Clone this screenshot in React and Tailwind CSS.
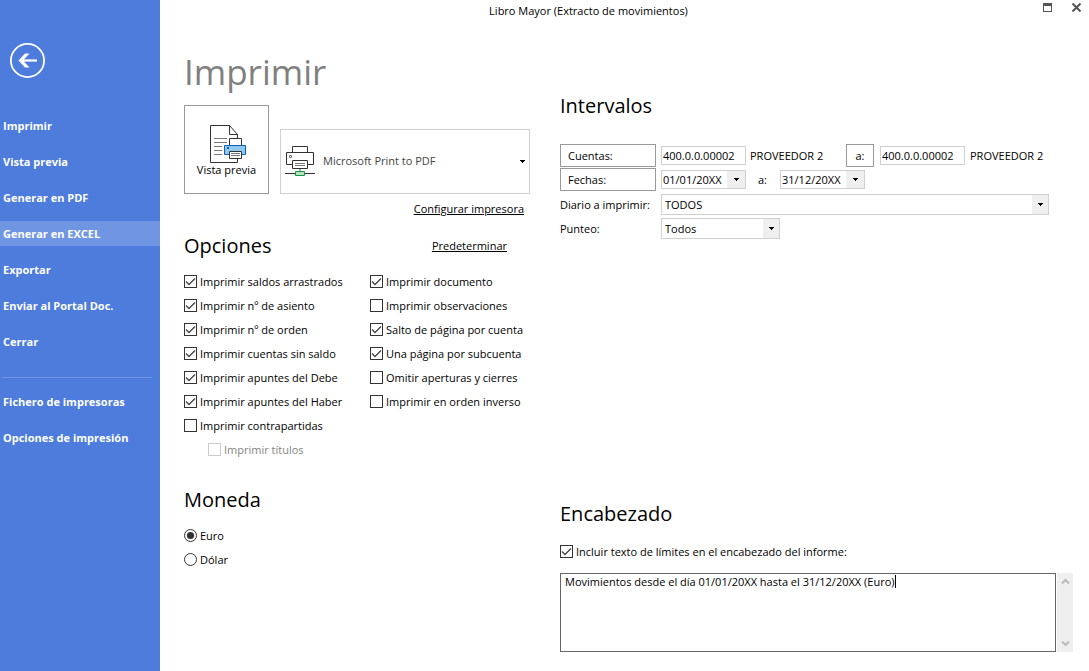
import React, { useState } from 'react';

const menuItems = [
    "Imprimir",
    "Vista previa",
    "Generar en PDF",
    "Generar en EXCEL",
    "Exportar",
    "Enviar al Portal Doc.",
    "Cerrar",
];

const printerItems = ["Fichero de impresoras", "Opciones de impresión"];

const leftOptions = [
    { label: "Imprimir saldos arrastrados", checked: true },
    { label: "Imprimir nº de asiento", checked: true },
    { label: "Imprimir nº de orden", checked: true },
    { label: "Imprimir cuentas sin saldo", checked: true },
    { label: "Imprimir apuntes del Debe", checked: true },
    { label: "Imprimir apuntes del Haber", checked: true },
    { label: "Imprimir contrapartidas", checked: false },
    { label: "Imprimir títulos", checked: false, disabled: true },
];

const rightOptions = [
    { label: "Imprimir documento", checked: true },
    { label: "Imprimir observaciones", checked: false },
    { label: "Salto de página por cuenta", checked: true },
    { label: "Una página por subcuenta", checked: true },
    { label: "Omitir aperturas y cierres", checked: false },
    { label: "Imprimir en orden inverso", checked: false },
];

function Checkbox({ label, checked, disabled }) {
    const [on, setOn] = useState(checked);

    return (
        <label className={`flex h-6 items-center gap-[3px] ${disabled ? "ml-6 text-[#858585]" : ""}`}>
            <span className="grid shrink-0 pb-px">
                <input
                    type="checkbox"
                    checked={on}
                    disabled={disabled}
                    onChange={(e) => setOn(e.target.checked)}
                    className="col-start-1 row-start-1 size-[13px] appearance-none border border-[#333] bg-white disabled:border-[#ccc]"
                />
                {on && (
                    <svg className="pointer-events-none col-start-1 row-start-1 size-[13px]" viewBox="0 0 13 13">
                        <path d="M2 6.5L5 9.5L11 3.5" fill="none" stroke="#444" strokeWidth="1.3" />
                    </svg>
                )}
            </span>
            <span className="whitespace-nowrap">{label}</span>
        </label>
    );
}

function Radio({ label, value, selected, onSelect }) {
    return (
        <label className="flex h-6 items-center gap-[3px]">
            <span className="grid pb-px">
                <input
                    type="radio"
                    name="moneda"
                    value={value}
                    checked={selected}
                    onChange={() => onSelect(value)}
                    className="col-start-1 row-start-1 size-[13px] appearance-none rounded-full border border-[#333] bg-white"
                />
                {selected && (
                    <svg className="pointer-events-none col-start-1 row-start-1 size-[13px]" viewBox="0 0 13 13">
                        <circle cx="6.5" cy="6.5" r="3.6" fill="#333" />
                    </svg>
                )}
            </span>
            {label}
        </label>
    );
}

function Arrow() {
    return (
        <svg className="h-[3px] w-[5px]" viewBox="0 0 5 3" shapeRendering="crispEdges">
            <path d="M0 0H5V1H4V2H3V3H2V2H1V1H0Z" fill="#000" />
        </svg>
    );
}

function Select({ id, value, className }) {
    return (
        <div className={`grid border border-[#d0d0d0] bg-white ${className}`}>
            <select id={id} className="col-start-1 row-start-1 w-full appearance-none px-[3px] outline-none">
                <option>{value}</option>
            </select>
            <span className="pointer-events-none col-start-1 row-start-1 flex w-4 items-center justify-center justify-self-end bg-[#efefef]">
                <Arrow />
            </span>
        </div>
    );
}

function DateField({ label, value }) {
    return (
        <div className="flex h-[19px] w-[85px] border border-[#d0d0d0] bg-white">
            <input aria-label={label} defaultValue={value} className="w-0 flex-1 px-px outline-none" />
            <button aria-label={`Abrir ${label}`} className="flex w-[18px] items-center justify-center bg-[#efefef]">
                <Arrow />
            </button>
        </div>
    );
}

function PreviewIcon() {
    return (
        <svg className="ml-[3px] h-[38px] w-9" viewBox="0 0 36 38" fill="none">
            <path d="M19.5 .5H.5V37.5H27.5V9.5L19.5 .5V9.5H27.5" fill="#fff" stroke="#333" />
            <path d="M4 13.5H17M4 17.5H17M4 21.5H12M4 25.5H12M4 29.5H12" stroke="#777" />
            <path d="M19.5 13.5H31.5V20.5H19.5Z" fill="#fff" stroke="#333" />
            <path d="M14.5 20.5H35.5V29.5H14.5Z" fill="#91c8f0" stroke="#0f5fae" />
            <path d="M17 22H19V24H17Z" fill="#0f5fae" />
            <path d="M19.5 26.5H31.5V33.5H19.5Z" fill="#fff" stroke="#333" />
            <path d="M21 28.5H30M21 30.5H30" stroke="#777" />
        </svg>
    );
}

function PrinterIcon() {
    return (
        <svg className="size-[30px] shrink-0" viewBox="0 0 30 30" fill="none">
            <path d="M7.5 6.5V.5H22.5V6.5" stroke="#333" />
            <path d="M7.5 18.5H1.5V6.5H28.5V18.5H22.5" stroke="#333" />
            <path d="M4.5 9.5H6.5V11.5H4.5Z" stroke="#777" />
            <path d="M7.5 14.5H22.5V22.5H7.5Z" fill="#fff" stroke="#333" />
            <path d="M10 17.5H20M10 19.5H20" stroke="#777" />
            <path d="M15 23V25" stroke="#aaa" strokeWidth="2" />
            <path d="M0 27.5H10M20 27.5H30" stroke="#333" />
            <path d="M10.5 25.5H19.5V29.5H10.5Z" fill="#b9dfc0" stroke="#12953f" />
        </svg>
    );
}

function Sidebar() {
    const [active, setActive] = useState("Generar en EXCEL");
    const item = "block h-[25px] w-full pl-[3px] text-left";

    return (
        <aside className="w-40 shrink-0 bg-[#4d7cdc] pt-[43px] font-bold text-white">
            <button aria-label="Volver" className="ml-2.5 block">
                <svg className="size-[35px]" viewBox="0 0 35 35" fill="none">
                    <circle cx="17.5" cy="17.5" r="16.6" stroke="#fff" strokeWidth="1.8" />
                    <path d="M27 17.5H11" stroke="#fff" strokeWidth="2.2" />
                    <path d="M8.5 17.5L15 10.5H19.5L13 17.5L19.5 24.5H15Z" fill="#fff" />
                </svg>
            </button>
            <nav className="mt-[35px] flex flex-col gap-[11px]">
                {menuItems.map((name) => (
                    <button
                        key={name}
                        onClick={() => setActive(name)}
                        className={`${item} ${active === name ? "bg-[#7096e3]" : ""}`}
                    >
                        {name}
                    </button>
                ))}
            </nav>
            <hr className="mt-[23px] mr-2 ml-0.5 border-[#7096e3]" />
            <nav className="mt-[11px] flex flex-col gap-[11px]">
                {printerItems.map((name) => (
                    <button key={name} className={item}>{name}</button>
                ))}
            </nav>
        </aside>
    );
}

function TitleBar() {
    return (
        <header className="flex h-[22px] items-start">
            <h1 className="flex-1 text-center leading-[22px]">Libro Mayor (Extracto de movimientos)</h1>
            <div className="flex w-[72px] justify-end gap-5 pt-[3px] pr-2">
                <button aria-label="Maximizar">
                    <svg className="size-[9px]" viewBox="0 0 9 9" shapeRendering="crispEdges">
                        <path d="M.5 .5H8.5V8.5H.5Z" fill="none" stroke="#555" />
                        <path d="M0 0H9V3H0Z" fill="#555" />
                    </svg>
                </button>
                <button aria-label="Cerrar ventana">
                    <svg className="size-[9px]" viewBox="0 0 9 9">
                        <path d="M.5 .5L8.5 8.5M8.5 .5L.5 8.5" stroke="#555" strokeWidth="2" />
                    </svg>
                </button>
            </div>
        </header>
    );
}

export default function App() {
    const [currency, setCurrency] = useState("euro");
    const heading = "text-[20px] leading-7";
    const account = "h-[19px] w-[85px] border border-[#d0d0d0] px-px outline-none";
    const boxed = "h-[23px] border border-[#999] bg-white";

    return (
        <div className="flex min-h-screen bg-white font-['Open_Sans','Noto_Sans',sans-serif] text-[11px] leading-4 text-black">
            <Sidebar />
            <div className="min-w-0 flex-1">
                <TitleBar />
                <main className="flex gap-[30px] pr-4 pl-6">
                    <div className="w-[346px] shrink-0 pt-[26px]">
                        <h2 className="text-[35px] leading-[48px] text-[#808080]">Imprimir</h2>
                        <div className="mt-[9px] flex items-end gap-[11px]">
                            <button className="flex h-[89px] w-[85px] flex-col items-center border border-[#999] pt-[19px] leading-[14px]">
                                <PreviewIcon />
                                Vista previa
                            </button>
                            <div className="flex h-[65px] flex-1 items-center border border-[#d0d0d0] pr-1 pb-px pl-1">
                                <PrinterIcon />
                                <select
                                    aria-label="Impresora"
                                    className="ml-2 h-full flex-1 appearance-none text-[#444] outline-none"
                                >
                                    <option>Microsoft Print to PDF</option>
                                </select>
                                <Arrow />
                            </div>
                        </div>
                        <div className="mt-[7px] flex justify-end pr-1.5">
                            <a href="#configurar" className="underline">Configurar impresora</a>
                        </div>

                        <div className="mt-[15px] flex items-center justify-between pr-[23px]">
                            <h3 className={heading}>Opciones</h3>
                            <a href="#predeterminar" className="underline">Predeterminar</a>
                        </div>
                        <div className="mt-2.5 flex">
                            <div className="w-[186px]">
                                {leftOptions.map((o) => <Checkbox key={o.label} {...o} />)}
                            </div>
                            <div>
                                {rightOptions.map((o) => <Checkbox key={o.label} {...o} />)}
                            </div>
                        </div>

                        <h3 className={`mt-6 ${heading}`}>Moneda</h3>
                        <div className="mt-2.5">
                            <Radio label="Euro" value="euro" selected={currency === "euro"} onSelect={setCurrency} />
                            <Radio label="Dólar" value="dolar" selected={currency === "dolar"} onSelect={setCurrency} />
                        </div>
                    </div>

                    <div className="min-w-0 flex-1 pt-[70px]">
                        <h3 className={heading}>Intervalos</h3>
                        <div className="mt-6 grid grid-cols-[96px_1fr] gap-x-[5px] pr-6">
                            <button className={`${boxed} pl-[7px] text-left`}>Cuentas:</button>
                            <div className="flex h-6 items-center pb-px whitespace-nowrap">
                                <input aria-label="Cuenta inicial" defaultValue="400.0.0.00002" className={account} />
                                <span className="ml-1 w-24">PROVEEDOR 2</span>
                                <button className={`${boxed} w-7`}>a:</button>
                                <input aria-label="Cuenta final" defaultValue="400.0.0.00002" className={`ml-1.5 ${account}`} />
                                <span className="ml-[5px]">PROVEEDOR 2</span>
                            </div>
                            <button className={`${boxed} pl-[7px] text-left`}>Fechas:</button>
                            <div className="flex h-6 items-center pb-px">
                                <DateField label="Fecha inicial" value="01/01/20XX" />
                                <span className="w-[34px] pl-3">a:</span>
                                <DateField label="Fecha final" value="31/12/20XX" />
                            </div>
                            <label htmlFor="diario" className="flex h-6 items-end pb-[3px] whitespace-nowrap">Diario a imprimir:</label>
                            <div className="flex h-6 items-end pb-px">
                                <Select id="diario" value="TODOS" className="h-[21px] w-full" />
                            </div>
                            <label htmlFor="punteo" className="flex h-6 items-end pb-[3px]">Punteo:</label>
                            <div className="flex h-6 items-end pb-px">
                                <Select id="punteo" value="Todos" className="h-[21px] w-[119px]" />
                            </div>
                        </div>

                        <h3 className={`mt-[260px] ${heading}`}>Encabezado</h3>
                        <div className="mt-3">
                            <Checkbox label="Incluir texto de límites en el encabezado del informe:" checked />
                        </div>
                        <div className="relative mt-[9px] flex h-[79px] gap-px">
                            <textarea
                                autoFocus
                                aria-label="Texto del encabezado"
                                defaultValue="Movimientos desde el día 01/01/20XX hasta el 31/12/20XX (Euro)"
                                className="min-w-0 flex-1 resize-none border border-[#666] px-1 caret-transparent outline-none"
                            />
                            <span className="pointer-events-none absolute top-0.5 left-[335px] h-[13px] w-px bg-black" />
                            <div className="flex w-4 flex-col items-center justify-between bg-[#efefef] py-[5px]">
                                <svg className="h-[7px] w-[9px]" viewBox="0 0 9 7" fill="none">
                                    <path d="M1 5.5L4.5 2L8 5.5" stroke="#bbb" strokeWidth="2" />
                                </svg>
                                <svg className="h-[7px] w-[9px]" viewBox="0 0 9 7" fill="none">
                                    <path d="M1 1.5L4.5 5L8 1.5" stroke="#bbb" strokeWidth="2" />
                                </svg>
                            </div>
                        </div>
                    </div>
                </main>
            </div>
        </div>
    );
}
